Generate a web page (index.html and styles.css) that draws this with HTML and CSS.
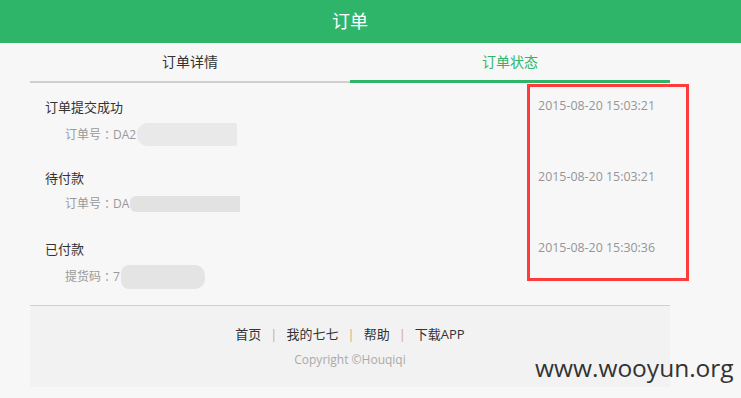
FILE: index.html
```html
<!DOCTYPE html>
<html lang="zh-CN">
<head>
    <meta charset="UTF-8">
    <meta name="viewport" content="width=device-width, initial-scale=1.0">
    <title>订单</title>
    <link rel="stylesheet" href="styles.css">
</head>
<body>

<header class="top-bar"><span class="top-title">订单</span></header>

<div class="page">
    <div class="tabs">
        <a class="tab">订单详情</a>
        <a class="tab active">订单状态</a>
    </div>

    <ul class="steps">
        <li class="step">
            <div class="step-main">
                <div class="step-title">订单提交成功</div>
                <div class="step-info">订单号<span class="colon">：</span>DA2<span class="mask mask-1"></span></div>
            </div>
            <div class="step-time">2015-08-20 15:03:21</div>
        </li>
        <li class="step">
            <div class="step-main">
                <div class="step-title">待付款</div>
                <div class="step-info">订单号<span class="colon">：</span>DA<span class="mask mask-2"></span></div>
            </div>
            <div class="step-time">2015-08-20 15:03:21</div>
        </li>
        <li class="step">
            <div class="step-main">
                <div class="step-title">已付款</div>
                <div class="step-info">提货码<span class="colon">：</span>7<span class="mask mask-3"></span></div>
            </div>
            <div class="step-time">2015-08-20 15:30:36</div>
        </li>
    </ul>

    <footer class="footer">
        <div class="footer-links">
            <a>首页</a><span class="sep">|</span><a>我的七七</a><span class="sep">|</span><a>帮助</a><span class="sep">|</span><a>下载APP</a>
        </div>
        <div class="copyright">Copyright ©Houqiqi</div>
    </footer>
</div>

<!-- annotation overlays -->
<div class="mark-box"></div>
<div class="watermark">www.wooyun.org</div>

</body>
</html>
```

FILE: styles.css
```css
body {
    margin: 0;
    background-color: #f7f7f7;
    font-family: "Open Sans", "Noto Sans CJK SC", sans-serif;
    color: #333;
    position: relative;
    height: 398px;
    overflow: hidden;
}

.top-bar {
    height: 43px;
    line-height: 43px;
    background-color: #2fb56a;
    color: #fff;
    font-size: 18px;
}

.top-title {
    display: block;
    width: 700px;
    text-align: center;
}

.page {
    width: 640px;
    margin-left: 30px;
}

.tabs {
    display: flex;
    align-items: flex-end;
    height: 40px;
}

.tab {
    flex: 1;
    text-align: center;
    font-size: 14px;
    line-height: 38px;
    height: 38px;
    border-bottom: 2px solid #cfcfcf;
    color: #333;
    cursor: pointer;
}

.tab.active {
    color: #2fb56a;
    border-bottom: 3px solid #2fb56a;
    height: 37px;
}

.steps {
    list-style: none;
    margin: 0;
    padding: 0;
}

.step {
    display: flex;
    justify-content: space-between;
    align-items: flex-start;
    height: 71px;
    box-sizing: border-box;
    padding: 14px 15px 0 15px;
}

.step-title {
    font-size: 13px;
    line-height: 20px;
    color: #333;
}

.step-info {
    margin-top: 6px;
    padding-left: 20px;
    font-size: 12px;
    line-height: 20px;
    color: #999;
    display: flex;
    align-items: center;
}

.colon {
    font-family: "Noto Sans CJK TC", sans-serif;
}

.step-time {
    font-size: 12.4px;
    line-height: 20px;
    color: #959595;
    margin-top: -1px;
}

.mask {
    display: inline-block;
    background-color: #e7e7e7;
    margin-left: 1px;
}

.mask-1 {
    width: 100px;
    height: 23px;
    border-radius: 11px 2px 2px 11px;
    background-color: #e9e9e9;
}

.mask-2 {
    width: 110px;
    height: 16px;
    border-radius: 6px 0 0 6px;
    background-color: #e2e2e2;
}

.mask-3 {
    width: 84px;
    height: 24px;
    border-radius: 8px 10px 10px 8px;
    background-color: #e4e4e4;
}

.footer {
    margin-top: 9px;
    border-top: 1px solid #d0d0d0;
    background-color: #f2f2f2;
    height: 82px;
    box-sizing: border-box;
    padding-top: 19px;
    text-align: center;
}

.footer-links {
    font-size: 13px;
    line-height: 18px;
    color: #333;
}

.footer-links .sep {
    color: #d8a67c;
    margin: 0 9px;
}

.copyright {
    margin-top: 8px;
    font-size: 12px;
    line-height: 18px;
    color: #aaa;
}

.mark-box {
    position: absolute;
    left: 527px;
    top: 84px;
    width: 156px;
    height: 191px;
    border: 3px solid #ff3b3b;
}

.watermark {
    position: absolute;
    left: 535px;
    top: 351px;
    font-family: "Open Sans", "Liberation Sans", sans-serif;
    font-size: 24.5px;
    color: #333;
}
```
